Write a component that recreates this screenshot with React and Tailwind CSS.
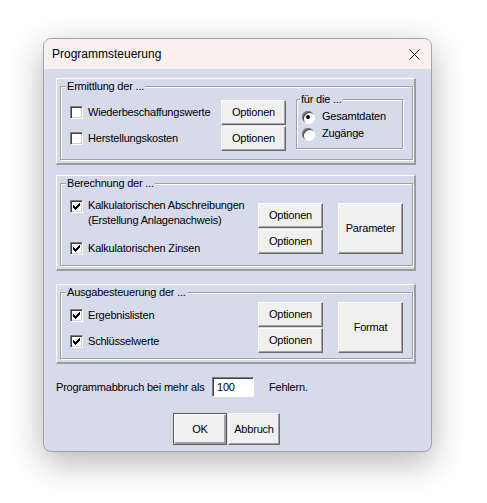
import React from "react";

const CHECK = [
  [0, 2], [1, 3], [2, 4], [3, 3], [4, 2], [5, 1], [6, 0]
];

function Checkbox({ checked }) {
  return (
    <span className="relative block h-[13px] w-[13px] shrink-0 border border-t-[#808080] border-l-[#808080] border-r-white border-b-white bg-white shadow-[inset_1px_1px_0_#404040,inset_-1px_-1px_0_#d4d0c8]">
      {checked && (
        <svg className="absolute left-[2px] top-[2px]" width="7" height="7" viewBox="0 0 7 7">
          {CHECK.map(([x, y]) => (
            <rect key={x} x={x} y={y} width="1" height="3" fill="#000" />
          ))}
        </svg>
      )}
    </span>
  );
}

function Radio({ checked }) {
  return (
    <span className="flex h-[12px] w-[12px] shrink-0 items-center justify-center rounded-full bg-white shadow-[inset_1px_1px_0_#808080,inset_2px_2px_0_#505050,1px_1px_0_#fff]">
      {checked && <span className="block h-[4px] w-[4px] rounded-full bg-black" />}
    </span>
  );
}

function Btn({ children, className = "" }) {
  return (
    <button
      type="button"
      className={`flex items-center justify-center border border-t-white border-l-white border-r-[#6a6a6a] border-b-[#6a6a6a] bg-[#f0f0f0] shadow-[inset_-1px_-1px_0_#a0a0a0] text-[11px] leading-none tracking-[-0.2px] text-black ${className}`}
    >
      {children}
    </button>
  );
}

function Frame({ height, legend, children }) {
  return (
    <div
      className="border-t border-l border-t-white border-l-white border-r-2 border-b-2 border-r-[#9c9c9c] border-b-[#9c9c9c] pt-[7px] pl-[3px] pr-[1px] pb-[3px]"
      style={{ height }}
    >
      <div className="relative h-full border border-[#a0a0a0] shadow-[1px_1px_0_#fff,inset_1px_1px_0_#fff]">
        <span className="absolute left-[5px] top-[-8px] bg-[#d5dbea] px-[1px] leading-[14px]">{legend}</span>
        {children}
      </div>
    </div>
  );
}

function CheckRow({ checked, children }) {
  return (
    <div className="flex h-[25px] items-center">
      <Checkbox checked={checked} />
      <span className="ml-[5px]">{children}</span>
    </div>
  );
}

export default function App() {
  return (
    <div className="min-h-[503px] bg-white pt-[38px] pl-[43px] font-['Liberation_Sans',Arial,sans-serif] text-[11px] tracking-[-0.2px] text-black">
      <div className="flex h-[414px] w-[389px] flex-col overflow-hidden rounded-lg border border-[#a3a3a3] bg-[#d5dbea] shadow-[0_10px_34px_rgba(0,0,0,0.3)]">
        <div className="flex h-[30px] shrink-0 items-center justify-between bg-[#f9f1ef] pl-[8px] pr-[10px]">
          <span className="text-[12px] tracking-normal">Programmsteuerung</span>
          <svg width="11" height="11" viewBox="0 0 11 11" className="mr-[1px]">
            <path d="M0.5 0.5L10.5 10.5M10.5 0.5L0.5 10.5" stroke="#1a1a1a" strokeWidth="1" />
          </svg>
        </div>

        <div className="flex flex-col pt-[9px] pl-[12px] pr-[15px]">
          <Frame height={87} legend="Ermittlung der ...">
            <div className="flex items-start pt-[13px] pl-[9px]">
              <div className="flex w-[151px] flex-col gap-[1px]">
                <CheckRow>Wiederbeschaffungswerte</CheckRow>
                <CheckRow>Herstellungskosten</CheckRow>
              </div>
              <div className="flex w-[65px] flex-col gap-[1px]">
                <Btn className="h-[25px]">Optionen</Btn>
                <Btn className="h-[25px]">Optionen</Btn>
              </div>
              <div className="relative ml-[10px] mt-[-1px] h-[50px] w-[107px] border border-[#a0a0a0] shadow-[1px_1px_0_#fff,inset_1px_1px_0_#fff]">
                <span className="absolute left-[3px] top-[-8px] bg-[#d5dbea] px-[1px] leading-[14px]">für die ...</span>
                <div className="flex flex-col pt-[8px] pl-[5px]">
                  <div className="flex h-[17px] items-center">
                    <Radio checked />
                    <span className="ml-[8px]">Gesamtdaten</span>
                  </div>
                  <div className="flex h-[17px] items-center">
                    <Radio />
                    <span className="ml-[8px]">Zugänge</span>
                  </div>
                </div>
              </div>
            </div>
          </Frame>

          <div className="mt-[10px]">
            <Frame height={96} legend="Berechnung der ...">
              <div className="flex items-start pt-[14px] pl-[9px]">
                <div className="flex w-[188px] flex-col">
                  <div className="flex items-start">
                    <span className="mt-[2px]">
                      <Checkbox checked />
                    </span>
                    <span className="ml-[5px] leading-[15px]">
                      Kalkulatorischen Abschreibungen
                      <br />
                      (Erstellung Anlagenachweis)
                    </span>
                  </div>
                  <div className="mt-[13px] flex h-[15px] items-center">
                    <Checkbox checked />
                    <span className="ml-[5px]">Kalkulatorischen Zinsen</span>
                  </div>
                </div>
                <div className="mt-[5px] flex w-[65px] flex-col gap-[1px]">
                  <Btn className="h-[25px]">Optionen</Btn>
                  <Btn className="h-[25px]">Optionen</Btn>
                </div>
                <Btn className="ml-[15px] mt-[5px] h-[51px] w-[65px]">Parameter</Btn>
              </div>
            </Frame>
          </div>

          <div className="mt-[13px]">
            <Frame height={80} legend="Ausgabesteuerung der ...">
              <div className="flex items-start pt-[9px] pl-[9px]">
                <div className="mt-[1px] flex w-[188px] flex-col gap-[1px]">
                  <CheckRow checked>Ergebnislisten</CheckRow>
                  <CheckRow checked>Schlüsselwerte</CheckRow>
                </div>
                <div className="flex w-[65px] flex-col gap-[1px]">
                  <Btn className="h-[25px]">Optionen</Btn>
                  <Btn className="h-[25px]">Optionen</Btn>
                </div>
                <Btn className="ml-[15px] h-[51px] w-[65px]">Format</Btn>
              </div>
            </Frame>
          </div>

          <div className="mt-[13px] flex h-[20px] items-center">
            <span className="w-[156px]">Programmabbruch bei mehr als</span>
            <div className="flex h-[20px] w-[42px] items-center border border-t-[#808080] border-l-[#808080] border-r-white border-b-white bg-white pl-[4px] shadow-[inset_1px_1px_0_#404040]">
              100
            </div>
            <span className="ml-[15px]">Fehlern.</span>
          </div>

          <div className="mt-[16px] flex pl-[117px]">
            <button
              type="button"
              className="flex h-[32px] w-[54px] items-center justify-center border border-[#5a5a5a] bg-[#f0f0f0] shadow-[inset_1px_1px_0_#fff,inset_-2px_-2px_0_#a0a0a0] text-[11px] leading-none"
            >
              OK
            </button>
            <Btn className="ml-[1px] h-[32px] w-[52px]">Abbruch</Btn>
          </div>
        </div>
      </div>
    </div>
  );
}
